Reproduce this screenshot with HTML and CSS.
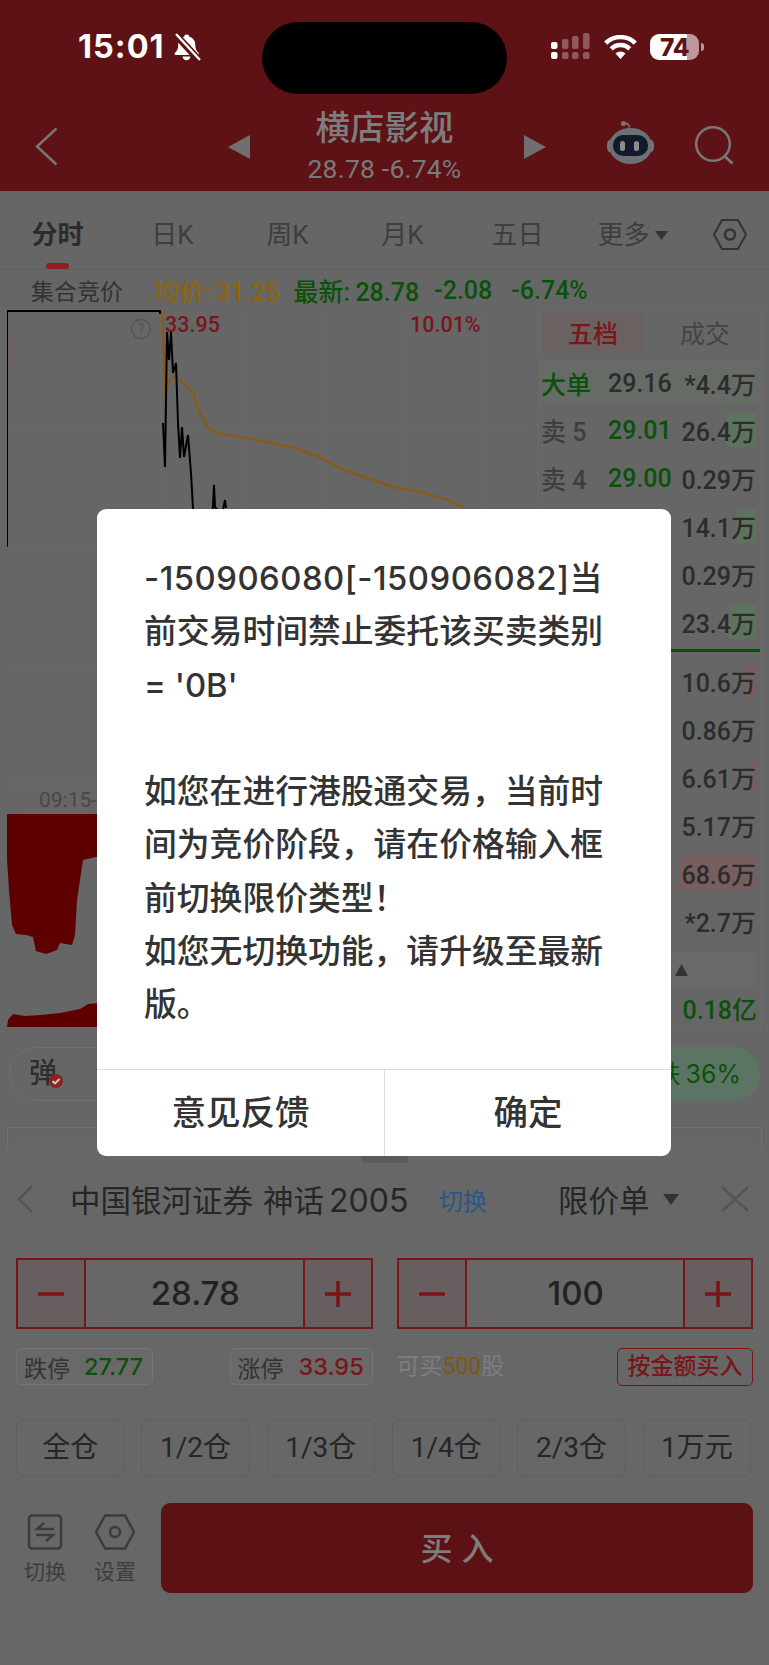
FILE: index.html
```html
<!DOCTYPE html>
<html lang="zh-CN">
<head>
<meta charset="utf-8">
<title>横店影视</title>
<link rel="stylesheet" href="styles.css">
</head>
<body>
<div class="phone">
  <header class="header">
    <div class="status">
      <div class="status-left">
        <span class="time">15:01</span>
        <svg class="bell" width="28" height="28" viewBox="0 0 28 28"><path d="M13.500 1.500c1.600 0 2.600.9 2.800 2.200 3.800 1 6 4 6 8.300 0 3.700 1 5.500 3.200 7.800.9 1 .3 2.200-1 2.200H3c-1.300 0-1.900-1.200-1-2.200 2.200-2.300 3.200-4.100 3.200-7.800 0-4.300 2.200-7.300 6-8.300.2-1.300 1-2.200 2.300-2.200z" fill="#fff"/><path d="M9.500 23.500h8c-.3 2.300-2 3.700-4 3.700s-3.700-1.400-4-3.700z" fill="#fff"/><path d="M2 1l24 26" stroke="#5e1215" stroke-width="7"/><path d="M3 1l24 26" stroke="#fff" stroke-width="2.400"/></svg>
      </div>
      <div class="island"></div>
      <div class="status-right">
        <svg class="signal" width="40" height="28" viewBox="0 0 40 28"><g fill="#fff"><rect x="0" y="9" width="6.500" height="7" rx="2"/><rect x="0" y="19" width="6.500" height="7" rx="2"/></g><g fill="#fff" opacity=".3"><rect x="11" y="6" width="6.500" height="10" rx="2"/><rect x="21" y="3" width="6.500" height="13" rx="2"/><rect x="32" y="0" width="6.500" height="16" rx="2"/><rect x="11" y="19" width="6.500" height="7" rx="2"/><rect x="21" y="19" width="6.500" height="7" rx="2"/><rect x="32" y="19" width="6.500" height="7" rx="2"/></g></svg>
        <svg class="wifi" width="33" height="24" viewBox="0 0 33 24"><g fill="none" stroke="#fff" stroke-width="4.500"><path d="M1.700 8.200a21 21 0 0 1 29.600 0"/><path d="M7.300 13.800a13 13 0 0 1 18.400 0"/></g><path d="M11.500 18.500a7 7 0 0 1 10 0l-5 5.500z" fill="#fff"/></svg>
        <div class="battery"><span class="battery-body">74</span><span class="battery-nub"></span></div>
      </div>
    </div>
    <nav class="nav">
      <div class="nav-left">
        <svg width="23" height="39" viewBox="0 0 23 39"><path d="M21.500 1.500L2 19.500l19.500 18" fill="none" stroke="#777" stroke-width="2.500"/></svg>
      </div>
      <svg class="tri-left" width="22" height="24" viewBox="0 0 22 24"><path d="M22 0v24L0 12z" fill="#6f6f6f"/></svg>
      <div class="stock">
        <div class="stock-name">横店影视</div>
        <div class="stock-price">28.78 -6.74%</div>
      </div>
      <svg class="tri-right" width="22" height="24" viewBox="0 0 22 24"><path d="M0 0v24l22-12z" fill="#6f6f6f"/></svg>
      <svg class="robot" width="47" height="44" viewBox="0 0 47 44"><path d="M16.500 2.500c3-1 5.500.5 6 4" fill="none" stroke="#777" stroke-width="1.800"/><circle cx="16.500" cy="2.500" r="2.500" fill="#777"/><ellipse cx="2.500" cy="25" rx="2.500" ry="6" fill="#777"/><ellipse cx="44.500" cy="25" rx="2.500" ry="6" fill="#777"/><ellipse cx="23.500" cy="25" rx="21.500" ry="18" fill="#6d7074"/><rect x="6" y="14" width="35" height="21" rx="10" fill="#131a2b"/><rect x="13" y="20" width="5" height="10" rx="2.500" fill="#8c8c8c"/><rect x="27" y="20" width="5" height="10" rx="2.500" fill="#8c8c8c"/></svg>
      <svg class="search" width="42" height="42" viewBox="0 0 42 42"><circle cx="18" cy="18" r="16.800" fill="none" stroke="#777" stroke-width="2.500"/><path d="M29.500 30l8 7.500" stroke="#777" stroke-width="3"/></svg>
    </nav>
  </header>

  <div class="tabs">
    <div class="tab tab-on">分时</div>
    <div class="tab">日K</div>
    <div class="tab">周K</div>
    <div class="tab">月K</div>
    <div class="tab">五日</div>
    <div class="tab">更多<svg class="more-caret" width="13" height="11" viewBox="0 0 13 11"><path d="M0 1h13L6.500 10z" fill="#333"/></svg></div>
    <div class="tab-hex">
      <svg width="34" height="31" viewBox="0 0 34 31"><path d="M9 1h16l8 14.500L25 30H9L1 15.500z" fill="none" stroke="#333" stroke-width="2"/><circle cx="17" cy="15.500" r="5" fill="none" stroke="#333" stroke-width="2.500"/></svg>
    </div>
  </div>

  <div class="quote">
    <span class="quote-phase">集合竞价</span>
    <span class="quote-avg">均价: 31.25</span>
    <span class="quote-new">最新: 28.78</span>
    <span class="quote-new">-2.08</span>
    <span class="quote-new quote-last">-6.74%</span>
  </div>

  <div class="market">
    <div class="charts">
      <svg class="price-chart" width="531" height="475" viewBox="7 310 531 475">
        <g class="grid-lines">
          <path d="M241 310v475M321 310v475M402 310v475M482 310v475M7 428h523M7 547h523M7 666h523M7 784h523M161 310v475"/>
        </g>
        <ellipse cx="8" cy="352" rx="7" ry="19" fill="#6d6262"/>
        <path class="avg-line" d="M162 312L165.500 398L168 384L170 380L175 376L180 380L187 386L194 393L197 407L202 417L207 427L217 433L240 437L246 438L295 448L319 457L344 470L393 487L422 492L447 500L464 508"/>
        <path class="box-line" d="M7 547V311H160V314"/>
        <path class="price-line" d="M163 423L165 467L167 332L169 360L171 332L173 373L176 363L178 423L180 458L182 427L184 457L188 435L191 473L193 508L200 530L210 520L213 507L214 485L215 507L222 515L225 500L226 508"/>
        <circle class="help" cx="141" cy="329" r="9.500"/>
        <text class="help-mark" x="141" y="334">?</text>
        <text class="chart-label" x="165" y="332">33.95</text>
        <text class="chart-label" x="410" y="332">10.01%</text>
      </svg>
      <div class="time-axis">09:15-09:25</div>
      <svg class="volume-chart" width="531" height="213" viewBox="7 814 531 213">
        <path d="M7 814H110V857H96L83 860L80 880L77 900L75 935L72 945L66 944L60 943L57 950L46 954L36 951L33 937L26 935L16 934L12 925L9 890L7 860z" fill="#5f0000"/>
        <path d="M7 1027L8 1020L13 1014L25 1016L40 1015L60 1013L80 1009L88 1004L110 1002V1027z" fill="#5f0000"/>
      </svg>
    </div>
    <aside class="book">
      <div class="book-tabs"><span class="book-tab book-tab-on">五档</span><span class="book-tab">成交</span></div>
      <div class="row row-big"><span class="row-label row-green">大单</span><span class="row-price">29.16</span><span class="row-vol">*4.4万</span></div>
      <div class="row"><span class="row-label">卖 5</span><span class="row-price row-green">29.01</span><span class="row-vol"><i class="bar bar-green" style="width:30px"></i>26.4万</span></div>
      <div class="row"><span class="row-label">卖 4</span><span class="row-price row-green">29.00</span><span class="row-vol">0.29万</span></div>
      <div class="row"><span class="row-label"></span><span class="row-price"></span><span class="row-vol"><i class="bar bar-green" style="width:19px"></i>14.1万</span></div>
      <div class="row"><span class="row-label"></span><span class="row-price"></span><span class="row-vol">0.29万</span></div>
      <div class="row"><span class="row-label"></span><span class="row-price"></span><span class="row-vol"><i class="bar bar-green" style="width:27px"></i>23.4万</span></div>
      <div class="book-split"></div>
      <div class="row"><span class="row-label"></span><span class="row-price"></span><span class="row-vol"><i class="bar bar-red" style="width:11px"></i>10.6万</span></div>
      <div class="row"><span class="row-label"></span><span class="row-price"></span><span class="row-vol">0.86万</span></div>
      <div class="row"><span class="row-label"></span><span class="row-price"></span><span class="row-vol"><i class="bar bar-red" style="width:4px"></i>6.61万</span></div>
      <div class="row"><span class="row-label"></span><span class="row-price"></span><span class="row-vol"><i class="bar bar-red" style="width:3px"></i>5.17万</span></div>
      <div class="row"><span class="row-label"></span><span class="row-price"></span><span class="row-vol"><i class="bar bar-red" style="width:77px"></i>68.6万</span></div>
      <div class="row"><span class="row-label"></span><span class="row-price"></span><span class="row-vol">*2.7万</span></div>
      <div class="book-fold"><svg width="13" height="12" viewBox="0 0 13 12"><path d="M6.500 0L13 12H0z" fill="#333"/></svg></div>
      <div class="book-total">0.18亿</div>
    </aside>
  </div>

  <div class="pills">
    <div class="pill-left">
      <span class="pill-mark">弹<svg class="pill-check" width="14" height="14" viewBox="0 0 14 14"><circle cx="7" cy="7" r="7" fill="#8c2222"/><path d="M3.500 7l2.500 2.500L10.500 5" fill="none" stroke="#ccc" stroke-width="1.800"/></svg></span>
    </div>
    <div class="pill-right">跌 36%</div>
  </div>

  <div class="under-card"></div>

  <section class="sheet">
    <div class="sheet-handle"></div>
    <div class="sheet-head">
      <svg width="16" height="28" viewBox="0 0 16 28"><path d="M15 1L2 14l13 13" fill="none" stroke="#555" stroke-width="2.500"/></svg>
      <span class="broker">中国银河证券 神话<span class="broker-num">2005</span></span>
      <span class="switch-link">切换</span>
      <span class="order-type">限价单</span>
      <svg class="order-caret" width="16" height="11" viewBox="0 0 16 11"><path d="M0 0h16L8 11z" fill="#333"/></svg>
      <svg class="sheet-close" width="28" height="26" viewBox="0 0 28 26"><path d="M1 1l26 24M27 1L1 25" stroke="#555" stroke-width="2.500"/></svg>
    </div>
    <div class="steppers">
      <div class="stepper">
        <span class="step"><svg width="26" height="4" viewBox="0 0 26 4"><path d="M0 2h26" stroke="#7a1416" stroke-width="3.500"/></svg></span>
        <span class="step-value">28.78</span>
        <span class="step"><svg width="26" height="26" viewBox="0 0 26 26"><path d="M0 13h26M13 0v26" stroke="#7a1416" stroke-width="3.500"/></svg></span>
      </div>
      <div class="stepper">
        <span class="step"><svg width="26" height="4" viewBox="0 0 26 4"><path d="M0 2h26" stroke="#7a1416" stroke-width="3.500"/></svg></span>
        <span class="step-value">100</span>
        <span class="step"><svg width="26" height="26" viewBox="0 0 26 26"><path d="M0 13h26M13 0v26" stroke="#7a1416" stroke-width="3.500"/></svg></span>
      </div>
    </div>
    <div class="limits">
      <div class="limit-side">
        <span class="chip chip-down">跌停<b class="chip-green">27.77</b></span>
        <span class="chip chip-up">涨停<b class="chip-red">33.95</b></span>
      </div>
      <div class="limit-side">
        <span class="can-buy">可买<b class="can-buy-num">500</b>股</span>
        <span class="by-amount">按金额买入</span>
      </div>
    </div>
    <div class="ratios">
      <span class="ratio">全仓</span>
      <span class="ratio">1/2仓</span>
      <span class="ratio">1/3仓</span>
      <span class="ratio">1/4仓</span>
      <span class="ratio">2/3仓</span>
      <span class="ratio">1万元</span>
    </div>
    <div class="actions">
      <div class="tool tool-switch">
        <svg width="36" height="36" viewBox="0 0 36 36"><rect x="2" y="1.500" width="32" height="33" rx="3" fill="none" stroke="#3c3c3c" stroke-width="2.500"/><path d="M17 9l-7 6h17M19 27l7-6H9" fill="none" stroke="#3c3c3c" stroke-width="2.500"/></svg>
        <span>切换</span>
      </div>
      <div class="tool tool-set">
        <svg width="40" height="36" viewBox="0 0 40 36"><path d="M10 1.500h20L39 18l-9 16.500H10L1 18z" fill="none" stroke="#3c3c3c" stroke-width="2.500"/><circle cx="20" cy="18" r="5" fill="none" stroke="#3c3c3c" stroke-width="2.500"/></svg>
        <span>设置</span>
      </div>
      <div class="buy">买入</div>
    </div>
  </section>

  <div class="modal">
    <div class="modal-text"><span class="modal-code">-150906080[-150906082]</span>当<br>前交易时间禁止委托该买卖类别<br>= '0B'<br><br>如您在进行港股通交易，当前时<br>间为竞价阶段，请在价格输入框<br>前切换限价类型！<br>如您无切换功能，请升级至最新<br>版。</div>
    <div class="modal-foot">
      <span class="modal-btn">意见反馈</span>
      <span class="modal-btn modal-btn-ok">确定</span>
    </div>
  </div>
</div>
</body>
</html>
```
FILE: styles.css
```css
* { box-sizing: border-box; }
html, body { margin: 0; padding: 0; background: #666; }
body { font-family: Roboto, "Noto Sans CJK SC", sans-serif; color: #2c2c2c; }
.phone { position: relative; width: 769px; height: 1665px; overflow: hidden; background: #666; }

/* header */
.header { height: 191px; background: #5e1215; }
.status { height: 94px; padding-top: 22px; display: flex; align-items: center; }
.status-left { width: 262px; padding-left: 78px; display: flex; align-items: center; gap: 9px; margin-top: -22px; }
.time { font-family: Inter, sans-serif; font-weight: 700; font-size: 32.500px; line-height: 36px; color: #fff; letter-spacing: 1px; }
.bell { flex: none; margin-left: -1px; }
.island { width: 245px; height: 72px; border-radius: 36px; background: #000; flex: none; }
.status-right { flex: 1; display: flex; align-items: center; padding-left: 44px; margin-top: -22px; }
.signal { flex: none; }
.wifi { flex: none; margin-left: 13px; }
.battery { display: flex; align-items: center; margin-left: 13px; }
.battery-body { width: 49px; height: 26px; border-radius: 9px; background: linear-gradient(90deg, #fff 0 75%, #bd9799 75% 100%); color: #5e1215; font-family: Inter, sans-serif; font-weight: 800; font-size: 24.500px; line-height: 26px; padding-left: 10px; letter-spacing: -.2px; }
.battery-nub { width: 3px; height: 8px; margin-left: 2px; border-radius: 0 3px 3px 0; background: #bd9799; }

.nav { height: 97px; display: flex; align-items: center; }
.nav-left { width: 228px; padding-left: 35px; padding-top: 8px; }
.nav-left svg { display: block; }
.tri-left { flex: none; margin-top: 8px; }
.stock { width: 153px; margin: 4px 58px 0; text-align: center; flex: none; }
.stock-name { font-size: 34.500px; line-height: 44px; font-weight: 500; color: #7d7d7d; white-space: nowrap; margin: 0 -10px; }
.stock-price { font-size: 26.500px; line-height: 30px; margin: 4px -4px 0; letter-spacing: .2px; color: #7a7a7a; white-space: nowrap; }
.tri-right { flex: none; margin-left: 5px; margin-top: 8px; }
.robot { flex: none; margin-left: 61px; margin-top: 1px; }
.search { flex: none; margin-left: 41px; margin-top: 8px; }

/* tabs */
.tabs { height: 79px; display: grid; grid-template-columns: repeat(6, 115px) 1fr; grid-auto-rows: 78px; border-bottom: 1px solid #5f5f5f; }
.tab { position: relative; text-align: center; font-size: 26px; line-height: 88px; color: #3e3e3e; white-space: nowrap; }
.tab-on { font-weight: 700; color: #2c2c2c; }
.tab-on::after { content: ""; position: absolute; left: 46px; bottom: 0; width: 23px; height: 6px; border-radius: 3px; background: #8f2022; }
.more-caret { margin-left: 5px; vertical-align: 3px; }
.tab-hex { display: flex; justify-content: center; align-items: center; padding: 9px 0 0 0; }

/* quote line */
.quote { height: 40px; padding-left: 31px; display: flex; align-items: center; font-size: 25px; gap: 15px; white-space: nowrap; font-weight: 500; }
.quote-phase { font-size: 23px; font-weight: 400; color: #333; margin-right: 16px; }
.quote-avg { color: #8c640e; margin-right: -1px; word-spacing: -1px; }
.quote-new { color: #0a520a; word-spacing: -1px; }
.quote-last { margin-left: 4px; }

/* market */
.market { height: 720px; padding-left: 7px; display: flex; }
.charts { width: 531px; flex: none; display: flex; flex-direction: column; }
.price-chart, .volume-chart { display: block; flex: none; }
.grid-lines path { fill: none; stroke: #6a6a6a; stroke-width: 1; }
.avg-line { fill: none; stroke: #8c5a0c; stroke-width: 2; }
.box-line { fill: none; stroke: #000; stroke-width: 2; }
.price-line { fill: none; stroke: #000; stroke-width: 2; }
.help { fill: none; stroke: #555; stroke-width: 1.500; }
.help-mark { font-size: 14px; fill: #555; text-anchor: middle; }
.chart-label { font-size: 21.500px; font-weight: 500; fill: #7a161a; }
.time-axis { height: 29px; padding-left: 32px; font-size: 21px; line-height: 30px; color: #484848; white-space: nowrap; }

.book { width: 223px; flex: none; border: 1px solid #6b6b6b; display: flex; flex-direction: column; padding-top: 1px; overflow: hidden; }
.book-tabs { height: 48px; display: flex; padding: 0 5px 8px 4px; flex: none; }
.book-tab { flex: 1; text-align: center; font-size: 25px; line-height: 46px; color: #444; }
.book-tab-on { flex: none; width: 100px; background: #6a6261; color: #7a161a; font-weight: 500; margin-right: 12px; }
.row { height: 48px; flex: none; display: grid; grid-template-columns: 69px 63px 1fr; align-items: center; font-size: 25px; font-weight: 500; padding-right: 4px; white-space: nowrap; }
.row-big { height: 46px; background: #666b66; }
.row-label { color: #3e3e3e; padding-left: 2px; }
.row-price { text-align: center; color: #2c2c2c; }
.row-green { color: #0a520a; }
.row-vol { position: relative; z-index: 0; text-align: right; color: #2c2c2c; }
.bar { position: absolute; z-index: -1; right: 0; top: 1px; bottom: 1px; }
.bar-green { background: #5e735e; }
.bar-red { background: #785e5e; }
.book-split { height: 3px; flex: none; margin: 3px 0 5px; background: #0a520a; }
.book-fold { height: 35px; flex: none; margin: 7px 4px 0 0; background: #696969; display: flex; align-items: center; padding-left: 136px; }
.book-total { height: 42px; flex: none; padding: 6px 3px 0 0; text-align: right; font-size: 25px; font-weight: 500; line-height: 36px; color: #0a520a; white-space: nowrap; }

/* pills */
.pills { height: 54px; margin: 17px 9px 0; display: flex; justify-content: space-between; }
.pill-left { width: 240px; border: 1px solid #707070; border-radius: 27px; display: flex; align-items: center; padding-left: 19px; }
.pill-mark { position: relative; font-size: 28px; line-height: 34px; font-weight: 500; color: #2e2e2e; }
.pill-check { position: absolute; left: 20px; top: 17px; }
.pill-right { width: 220px; border-radius: 27px; background: #5b7463; color: #0a520a; font-size: 25px; line-height: 54px; text-align: right; padding-right: 19px; word-spacing: -2px; font-family: Inter, "Noto Sans CJK SC", sans-serif; }

.under-card { height: 40px; margin: 26px 7px 0; border: 1px solid #727272; border-bottom: 0; }

/* bottom sheet (overlays the page) */
.sheet { position: absolute; left: 0; right: 0; bottom: 0; height: 525px; padding: 16px 16px 0; border-radius: 24px 24px 0 0; background: #676767; }
.sheet-handle { width: 46px; height: 7px; margin: 0 auto; border-radius: 0 0 4px 4px; background: #5a5a5a; }
.sheet-head { height: 50px; margin-top: 11px; display: flex; align-items: center; white-space: nowrap; }
.sheet-head > svg:first-child { margin-left: 1px; flex: none; }
.broker { font-size: 30.500px; margin-left: 37px; width: 369px; color: #262626; flex: none; word-spacing: 2.500px; }
.broker-num { font-family: Inter, sans-serif; font-size: 32px; margin-left: 5px; }
.switch-link { font-size: 24px; color: #2a5688; width: 119px; flex: none; }
.order-type { font-size: 30.500px; color: #262626; width: 105px; flex: none; }
.sheet-close { flex: none; margin-left: 42px; }
.order-caret { flex: none; }
.steppers { margin-top: 34px; display: grid; grid-template-columns: 1fr 1fr; gap: 24px; }
.stepper { height: 71px; display: grid; grid-template-columns: 68px 1fr 68px; border: 2px solid #7a1416; }
.step { display: flex; align-items: center; justify-content: center; background: #675f5f; }
.step:first-child { border-right: 2px solid #7a1416; }
.step:last-child { border-left: 2px solid #7a1416; }
.step-value { font-family: Inter, sans-serif; font-size: 33px; line-height: 67px; padding-left: 2px; text-align: center; color: #222; font-weight: 500; }
.limits { margin-top: 19px; display: grid; grid-template-columns: 1fr 1fr; gap: 24px; }
.limit-side { height: 37px; display: flex; justify-content: space-between; align-items: stretch; white-space: nowrap; }
.chip { height: 37px; display: flex; align-items: center; padding-left: 7px; border: 1px solid #747474; border-radius: 5px; background: #696969; font-size: 23px; color: #333; }
.chip-down { width: 137px; }
.chip-up { width: 143px; }
.chip b { font-family: Inter, sans-serif; font-weight: 500; font-size: 23.500px; }
.chip-green { margin-left: 14px; color: #0a520a; }
.chip-red { margin-left: 15px; color: #7a161a; }
.can-buy { font-size: 23px; line-height: 37px; color: #7e7e7e; }
.can-buy-num { color: #83560e; font-weight: 400; }
.by-amount { width: 136px; height: 38px; border: 1px solid #7a1416; border-radius: 5px; text-align: center; font-size: 23px; line-height: 36px; color: #7a161a; font-weight: 500; }
.ratios { margin-top: 34px; padding-right: 2px; display: grid; grid-template-columns: repeat(6, 1fr); gap: 17px; }
.ratio { height: 58px; border: 1px solid #606060; border-radius: 8px; text-align: center; font-size: 28px; line-height: 56px; color: #262626; white-space: nowrap; }
.actions { margin-top: 26px; height: 90px; display: flex; align-items: flex-start; }
.tool { flex: none; display: flex; flex-direction: column; align-items: center; font-size: 21px; color: #3c3c3c; padding-top: 11px; white-space: nowrap; }
.tool svg { display: block; }
.tool span { margin-top: 9px; line-height: 26px; }
.tool-switch { width: 42px; margin-left: 8px; }
.tool-set { width: 42px; margin-left: 28px; }
.buy { flex: none; width: 592px; height: 90px; margin-left: 25px; padding-left: 9px; border-radius: 9px; background: #5c1215; text-align: center; color: #7e7e7e; font-size: 32px; line-height: 92px; letter-spacing: 9px; font-weight: 500; }

/* modal (overlays everything) */
.modal { position: absolute; left: 97px; top: 509px; width: 574px; height: 647px; border-radius: 9px; background: #fff; display: flex; flex-direction: column; font-family: Inter, "Noto Sans CJK SC", sans-serif; }
.modal-text { flex: 1; padding: 43px 0 0 47px; font-size: 32.800px; font-weight: 500; line-height: 53.300px; color: #333; white-space: nowrap; }
.modal-code { letter-spacing: .5px; }
.modal-foot { height: 87px; flex: none; display: grid; grid-template-columns: 287px 1fr; border-top: 1px solid #ddd; }
.modal-btn { text-align: center; font-size: 34.500px; line-height: 86px; color: #333; font-weight: 500; }
.modal-btn-ok { border-left: 1px solid #ddd; }
```
